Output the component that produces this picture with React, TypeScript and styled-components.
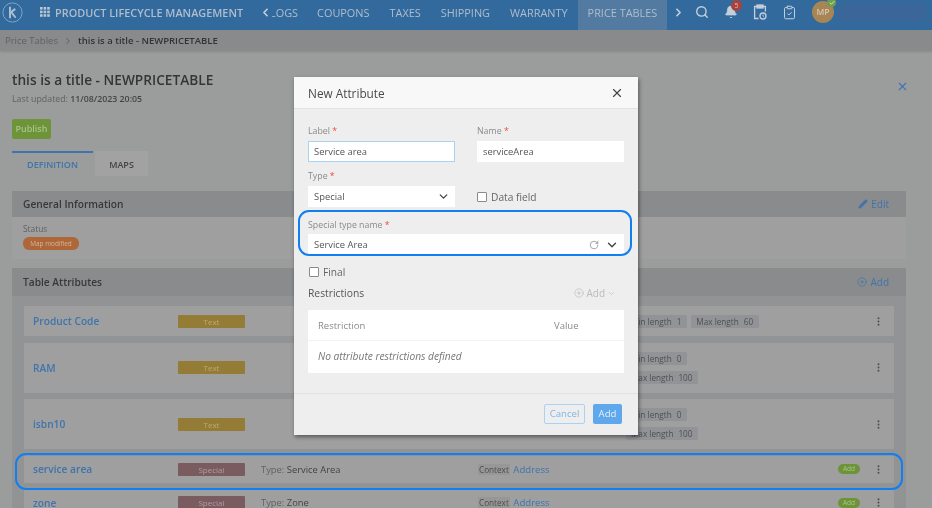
import React from "react";
import styled, { createGlobalStyle } from "styled-components";
import { Bell, Check, ChevronDown, ChevronLeft, ChevronRight, CirclePlus, ClipboardCheck, EllipsisVertical, Pencil, RotateCw, Search, X } from "lucide-react";

const GlobalStyle = createGlobalStyle`
  * { box-sizing: border-box; }
  html, body { margin: 0; padding: 0; width: 932px; height: 508px; overflow: hidden; }
  body { font-family: "Open Sans", "Liberation Sans", sans-serif; color: #333; }
`;

type Attr = {
  name: string;
  type: "Text" | "Special";
  tall?: boolean;
  typeName?: string;
  min?: number;
  max?: number;
};

const attributes: Attr[] = [
  { name: "Product Code", type: "Text", min: 1, max: 60 },
  { name: "RAM", type: "Text", tall: true, min: 0, max: 100 },
  { name: "isbn10", type: "Text", tall: true, min: 0, max: 100 },
  { name: "service area", type: "Special", typeName: "Service Area" },
  { name: "zone", type: "Special", typeName: "Zone" },
];

const navItems = ["COUPONS", "TAXES", "SHIPPING", "WARRANTY"];

const GridIcon = () => (
  <svg width="10" height="10" viewBox="0 0 10 10" fill="#b9c6d4">
    {[0, 3.6, 7.2].map((y) =>
      [0, 3.6, 7.2].map((x) => <rect key={`${x}-${y}`} x={x} y={y} width="2.6" height="2.6" />)
    )}
  </svg>
);

const LogoIcon = () => (
  <svg width="21" height="21" viewBox="0 0 21 21" fill="none">
    <circle cx="10.5" cy="10.5" r="9.6" stroke="#7fa3c6" strokeWidth="1" />
    <path d="M8 5.5v10M8 11l4.6-3.6M9.5 10.4l3.6 4.6" stroke="#a8bdd2" strokeWidth="2" strokeLinecap="round" />
  </svg>
);

const ClipboardClockIcon = () => (
  <svg width="14" height="16" viewBox="0 0 14 16" fill="none" stroke="#c3cfdb" strokeWidth="1.3">
    <path d="M4 2.5H1.6v12h4M10 2.5h2.4v5" />
    <rect x="4" y="1" width="6" height="3" fill="#c3cfdb" />
    <circle cx="10" cy="12" r="3" />
    <path d="M10 10.6V12l1 .6" strokeWidth="0.9" />
  </svg>
);

export default function App() {
  return (
    <Page>
      <GlobalStyle />
      <TopBar>
        <LogoSlot>
          <LogoIcon />
        </LogoSlot>
        <AppName>
          <GridIcon />
          PRODUCT LIFECYCLE MANAGEMENT
        </AppName>
        <NavArrow $side="left">
          <ChevronLeft size={13} strokeWidth={3} />
        </NavArrow>
        <NavScroller>
          <ClippedItem>LOGS</ClippedItem>
          {navItems.map((item) => (
            <NavItem key={item}>{item}</NavItem>
          ))}
          <ActiveNavItem>PRICE TABLES</ActiveNavItem>
        </NavScroller>
        <NavArrow $side="right">
          <ChevronRight size={13} strokeWidth={3} />
        </NavArrow>
        <ToolIcons>
          <Search size={14} strokeWidth={2.4} />
          <BellWrap>
            <Bell size={14} fill="#c3cfdb" strokeWidth={1.5} />
            <BellBadge>5</BellBadge>
          </BellWrap>
          <ClipboardClockIcon />
          <ClipboardCheck size={15} strokeWidth={1.6} />
        </ToolIcons>
        <Avatar>
          MP
          <AvatarCheck>
            <Check size={6} strokeWidth={4} />
          </AvatarCheck>
        </Avatar>
        <UserBox />
      </TopBar>

      <Breadcrumb>
        <CrumbLink>Price Tables</CrumbLink>
        <ChevronRight size={10} strokeWidth={2} />
        <CrumbCurrent>this is a title - NEWPRICETABLE</CrumbCurrent>
      </Breadcrumb>

      <Content>
        <TitleRow>
          <div>
            <Title>this is a title - NEWPRICETABLE</Title>
            <Updated>
              Last updated: <strong>11/08/2023 20:05</strong>
            </Updated>
          </div>
          <PageClose>
            <X size={13} strokeWidth={2} />
          </PageClose>
        </TitleRow>
        <PublishButton>Publish</PublishButton>
        <Tabs>
          <Tab $active>DEFINITION</Tab>
          <Tab>MAPS</Tab>
        </Tabs>

        <Section>
          <SectionHead>
            <SectionTitle>General Information</SectionTitle>
            <SectionAction>
              <Pencil size={10} fill="#3f74ad" strokeWidth={1.5} />
              Edit
            </SectionAction>
          </SectionHead>
          <InfoBody>
            <StatusLabel>Status</StatusLabel>
            <StatusPill>Map modified</StatusPill>
          </InfoBody>
        </Section>

        <Section>
          <SectionHead $tall>
            <SectionTitle>Table Attributes</SectionTitle>
            <SectionAction>
              <CirclePlus size={10} strokeWidth={1.6} />
              Add
            </SectionAction>
          </SectionHead>
          <Rows>
            {attributes.map((attr) => (
              <Row key={attr.name} $tall={attr.tall} $special={attr.type === "Special"}>
                <RowName>{attr.name}</RowName>
                <TypeBadge $type={attr.type}>{attr.type}</TypeBadge>
                {attr.type === "Special" ? (
                  <>
                    <TypeInfo>
                      <span>Type:</span> {attr.typeName}
                    </TypeInfo>
                    <ContextInfo>
                      <ContextTag>Context</ContextTag> Address
                    </ContextInfo>
                    <AddPill>Add</AddPill>
                  </>
                ) : (
                  <Chips $stack={attr.tall}>
                    <Chip>
                      Min length <b>{attr.min}</b>
                    </Chip>
                    <Chip>
                      Max length <b>{attr.max}</b>
                    </Chip>
                  </Chips>
                )}
                <RowMenu>
                  <EllipsisVertical size={11} strokeWidth={2.2} />
                </RowMenu>
              </Row>
            ))}
          </Rows>
        </Section>
      </Content>

      <Overlay>
        <RowRing />
        <Modal>
          <ModalHead>
            New Attribute
            <X size={14} strokeWidth={2} color="#444" />
          </ModalHead>
          <ModalBody>
            <FieldGrid>
              <Field>
                <FieldLabel>
                  Label <Req>*</Req>
                </FieldLabel>
                <Input $focus>Service area</Input>
              </Field>
              <Field>
                <FieldLabel>
                  Name <Req>*</Req>
                </FieldLabel>
                <Input>serviceArea</Input>
              </Field>
              <Field>
                <FieldLabel>
                  Type <Req>*</Req>
                </FieldLabel>
                <Input>
                  Special
                  <ChevronDown size={13} strokeWidth={2.4} color="#444" />
                </Input>
              </Field>
              <InlineCheck>
                <CheckBox />
                Data field
              </InlineCheck>
            </FieldGrid>
            <SpecialField>
              <FieldLabel>
                Special type name <Req>*</Req>
              </FieldLabel>
              <Input>
                Service Area
                <InputIcons>
                  <RotateCw size={10} strokeWidth={1.8} color="#888" />
                  <ChevronDown size={14} strokeWidth={2.4} color="#444" />
                </InputIcons>
              </Input>
            </SpecialField>
            <FinalCheck>
              <CheckBox />
              Final
            </FinalCheck>
            <RestrictionsHead>
              Restrictions
              <MutedAdd>
                <CirclePlus size={10} strokeWidth={1.6} />
                Add
                <ChevronDown size={9} strokeWidth={1.6} />
              </MutedAdd>
            </RestrictionsHead>
            <RestrictionTable>
              <RestrictionHeader>
                <span>Restriction</span>
                <span>Value</span>
              </RestrictionHeader>
              <EmptyNote>No attribute restrictions defined</EmptyNote>
            </RestrictionTable>
          </ModalBody>
          <ModalFooter>
            <CancelButton>Cancel</CancelButton>
            <AddButton>Add</AddButton>
          </ModalFooter>
        </Modal>
        <SpecialRing />
      </Overlay>
    </Page>
  );
}

const Page = styled.div`
  position: relative;
  width: 932px;
  height: 508px;
  overflow: hidden;
  background: #9b9d9c;
  filter: blur(0.5px);
`;

const TopBar = styled.header`
  display: flex;
  align-items: center;
  height: 30px;
  padding-bottom: 6px;
  background: #336a9e;
  color: #aebdcd;
  font-size: 10.9px;
  white-space: nowrap;
`;

const LogoSlot = styled.div`
  display: flex;
  width: 40px;
  padding-left: 2px;
`;

const AppName = styled.div`
  display: flex;
  align-items: center;
  gap: 5px;
  width: 219px;
  font-weight: 600;
`;

const NavArrow = styled.div<{ $side: "left" | "right" }>`
  display: flex;
  width: ${({ $side }) => ($side === "left" ? "13px" : "26px")};
  padding-left: ${({ $side }) => ($side === "left" ? "0" : "3px")};
  color: #c3cfdb;
`;

const NavScroller = styled.nav`
  display: flex;
  align-items: center;
  width: 397px;
  height: 30px;
  margin-bottom: -6px;
  overflow: hidden;
  padding-bottom: 6px;
`;

const ClippedItem = styled.span`
  margin-left: -2px;
  margin-right: 19px;
`;

const NavItem = styled.span`
  margin-right: 20px;
`;

const ActiveNavItem = styled.span`
  display: flex;
  align-items: center;
  height: 30px;
  margin: 0 0 -6px -10px;
  padding: 0 10px 6px;
  background: #537aa1;
`;

const ToolIcons = styled.div`
  display: flex;
  align-items: center;
  gap: 15px;
  width: 117px;
  color: #c3cfdb;
`;

const BellWrap = styled.div`
  position: relative;
  display: flex;
`;

const BellBadge = styled.span`
  position: absolute;
  top: -5px;
  left: 7px;
  width: 11px;
  height: 11px;
  border-radius: 50%;
  background: #a8423f;
  color: #d8c4c2;
  font-size: 7px;
  line-height: 11px;
  text-align: center;
`;

const Avatar = styled.div`
  position: relative;
  width: 22px;
  height: 22px;
  border-radius: 50%;
  background: #a88552;
  color: #d0c8b8;
  font-size: 8.5px;
  font-weight: 600;
  line-height: 22px;
  text-align: center;
`;

const AvatarCheck = styled.span`
  position: absolute;
  top: -3px;
  right: -2px;
  display: flex;
  align-items: center;
  justify-content: center;
  width: 9px;
  height: 9px;
  border-radius: 50%;
  background: #6f9f4d;
  color: #d5e2c8;
`;

const UserBox = styled.div`
  width: 88px;
  height: 19px;
  margin-left: 4px;
  background: #3a6699;
`;

const Breadcrumb = styled.div`
  display: flex;
  align-items: center;
  gap: 5px;
  height: 21px;
  padding-left: 5px;
  background: #898a8b;
  box-shadow: 0 1px 2px rgba(0, 0, 0, 0.12);
  font-size: 9.5px;
  color: #555;
`;

const CrumbLink = styled.span`
  color: #5f6163;
`;

const CrumbCurrent = styled.span`
  color: #333;
  font-weight: 600;
`;

const Content = styled.main`
  padding: 19px 26px 0 12px;
`;

const TitleRow = styled.div`
  display: flex;
  justify-content: space-between;
`;

const Title = styled.h1`
  margin: 0;
  height: 20px;
  font-size: 13.7px;
  font-weight: 600;
  line-height: 20px;
  color: #353535;
`;

const Updated = styled.div`
  margin-top: 2px;
  height: 14px;
  font-size: 8.8px;
  line-height: 14px;
  color: #5f6163;

  strong {
    font-weight: 600;
    color: #444;
  }
`;

const PageClose = styled.div`
  display: flex;
  align-items: center;
  height: 13px;
  margin: 0 -3px 0 0;
  padding-top: 16px;
  color: #3f74ad;
`;

const PublishButton = styled.div`
  width: 39px;
  height: 20px;
  margin-top: 13px;
  border-radius: 2px;
  background: #6d9439;
  color: #a8c38a;
  font-size: 9px;
  font-weight: 600;
  line-height: 20px;
  text-align: center;
`;

const Tabs = styled.div`
  display: flex;
  gap: 2px;
  height: 25px;
  margin-top: 12px;
`;

const Tab = styled.div<{ $active?: boolean }>`
  width: ${({ $active }) => ($active ? "81px" : "53px")};
  border-top: 2px solid ${({ $active }) => ($active ? "#3f74ad" : "transparent")};
  background: ${({ $active }) => ($active ? "#9b9d9c" : "#a2a2a2")};
  color: ${({ $active }) => ($active ? "#3f74ad" : "#444")};
  font-size: 9px;
  font-weight: 600;
  line-height: 23px;
  text-align: center;
`;

const Section = styled.section`
  margin-top: 9px;
  background: #929394;

  &:first-of-type {
    margin-top: 15px;
  }
`;

const SectionHead = styled.div<{ $tall?: boolean }>`
  display: flex;
  align-items: center;
  justify-content: space-between;
  height: ${({ $tall }) => ($tall ? "28px" : "26px")};
  padding: 0 17px 0 11px;
  background: #8a8b8d;
`;

const SectionTitle = styled.h2`
  margin: 0;
  font-size: 10.2px;
  font-weight: 600;
  color: #383838;
`;

const SectionAction = styled.div`
  display: flex;
  align-items: center;
  gap: 3px;
  font-size: 10px;
  color: #3f74ad;
`;

const InfoBody = styled.div`
  height: 42px;
  padding: 5px 11px;
  background: #9f9f9f;
`;

const StatusLabel = styled.div`
  height: 14px;
  font-size: 8.4px;
  line-height: 14px;
  color: #5f6163;
`;

const StatusPill = styled.div`
  width: 56px;
  height: 13px;
  margin-top: 1px;
  border-radius: 6px;
  background: #ae6739;
  color: #d2b59e;
  font-size: 6.4px;
  line-height: 13px;
  text-align: center;
`;

const Rows = styled.div`
  display: flex;
  flex-direction: column;
  gap: 6.5px;
  padding: 10px 12px 40px;
`;

const Row = styled.div<{ $tall?: boolean; $special?: boolean }>`
  display: flex;
  flex-shrink: 0;
  align-items: center;
  height: ${({ $tall, $special }) => ($tall ? "50px" : $special ? "27px" : "30px")};
  padding-left: 9px;
  background: #9f9f9f;
`;

const RowName = styled.div`
  width: 145px;
  font-size: 10.2px;
  font-weight: 600;
  color: #3f74ad;
`;

const TypeBadge = styled.div<{ $type: string }>`
  width: 67px;
  height: 13px;
  border-radius: 1px;
  background: ${({ $type }) => ($type === "Text" ? "#957c36" : "#7a5c60")};
  color: ${({ $type }) => ($type === "Text" ? "#bba870" : "#b09da0")};
  font-size: 8px;
  line-height: 13px;
  text-align: center;
`;

const TypeInfo = styled.div`
  width: 217px;
  margin-left: 16px;
  font-size: 9.4px;
  color: #444;

  span {
    color: #5f6163;
  }
`;

const ContextInfo = styled.div`
  flex: 1;
  font-size: 9.6px;
  color: #3f74ad;
`;

const ContextTag = styled.span`
  margin-right: 1px;
  padding: 0 1px;
  background: #979798;
  color: #4c4c4c;
  font-size: 8.2px;
`;

const AddPill = styled.div`
  width: 22px;
  height: 10px;
  margin-right: 13px;
  border-radius: 5px;
  background: #6d9439;
  color: #a8c38a;
  font-size: 6.5px;
  line-height: 10px;
  text-align: center;
`;

const Chips = styled.div<{ $stack?: boolean }>`
  display: flex;
  flex: 1;
  flex-direction: ${({ $stack }) => ($stack ? "column" : "row")};
  align-items: flex-start;
  gap: ${({ $stack }) => ($stack ? "6px" : "4px")};
  margin-left: 381px;
`;

const Chip = styled.div`
  display: flex;
  gap: 5px;
  align-items: center;
  height: 13px;
  padding: 0 6px 0 5px;
  border-radius: 2px;
  background: #919397;
  color: #4e4f52;
  font-size: 8.2px;

  b {
    font-weight: 400;
  }
`;

const RowMenu = styled.div`
  display: flex;
  width: 21px;
  color: #4c4c4c;
`;

const Overlay = styled.div`
  position: absolute;
  inset: 0;
`;

const RowRing = styled.div`
  position: absolute;
  left: 15px;
  top: 453px;
  width: 888px;
  height: 37px;
  border: 2px solid #0f7ff2;
  border-radius: 11px;
`;

const SpecialRing = styled.div`
  position: absolute;
  left: 298px;
  top: 210px;
  width: 334px;
  height: 46px;
  border: 2px solid #0f7ff2;
  border-radius: 11px;
`;

const Modal = styled.div`
  position: absolute;
  left: 294px;
  top: 77px;
  display: flex;
  flex-direction: column;
  width: 344px;
  height: 358px;
  background: #eeeeee;
  box-shadow: 1px 2px 4px rgba(0, 0, 0, 0.45);
`;

const ModalHead = styled.div`
  display: flex;
  align-items: center;
  justify-content: space-between;
  height: 32px;
  padding: 0 14px;
  background: #f8f8f8;
  border-bottom: 1px solid #e2e2e2;
  color: #4a4a4a;
  font-size: 11.8px;
`;

const ModalBody = styled.div`
  flex: 1;
  padding: 16px 14px 0;
`;

const FieldGrid = styled.div`
  display: grid;
  grid-template-columns: 147px 147px;
  column-gap: 22px;
  row-gap: 8px;
`;

const Field = styled.div`
  display: flex;
  flex-direction: column;
  gap: 3px;
`;

const FieldLabel = styled.label`
  height: 13px;
  font-size: 8.8px;
  line-height: 13px;
  color: #8a8a8a;
`;

const Req = styled.span`
  color: #e8503a;
`;

const Input = styled.div<{ $focus?: boolean }>`
  display: flex;
  align-items: center;
  justify-content: space-between;
  height: 21px;
  padding: 0 4px 0 5px;
  border: 1px solid ${({ $focus }) => ($focus ? "#a9d2f3" : "#fff")};
  background: #fff;
  color: #555;
  font-size: 9.4px;
`;

const InlineCheck = styled.div`
  display: flex;
  align-items: center;
  gap: 4px;
  padding-top: 16px;
  color: #666;
  font-size: 10.2px;
`;

const CheckBox = styled.span`
  width: 10px;
  height: 10px;
  border: 1px solid #8a8a8a;
  border-radius: 1px;
  background: #fff;
`;

const SpecialField = styled(Field)`
  gap: 2px;
  margin-top: 12px;
`;

const InputIcons = styled.span`
  display: flex;
  align-items: center;
  gap: 6px;
`;

const FinalCheck = styled(InlineCheck)`
  margin: 10px 0 0 1px;
  padding: 0;
`;

const RestrictionsHead = styled.div`
  display: flex;
  align-items: center;
  justify-content: space-between;
  height: 16px;
  margin-top: 6px;
  padding-right: 8px;
  color: #555;
  font-size: 10.3px;
`;

const MutedAdd = styled.span`
  display: flex;
  align-items: center;
  gap: 2px;
  color: #bbb;
  font-size: 10px;
`;

const RestrictionTable = styled.div`
  width: 316px;
  margin-top: 9px;
  background: #fff;
`;

const RestrictionHeader = styled.div`
  display: grid;
  grid-template-columns: 236px 1fr;
  align-items: center;
  height: 31px;
  padding-left: 10px;
  border-bottom: 1px solid #f3f3f3;
  color: #8a8a8a;
  font-size: 9.5px;
`;

const EmptyNote = styled.div`
  height: 32px;
  padding-left: 10px;
  color: #777;
  font-size: 10.2px;
  font-style: italic;
  line-height: 31px;
`;

const ModalFooter = styled.div`
  display: flex;
  justify-content: flex-end;
  gap: 8px;
  height: 42px;
  padding: 10px 16px 0 0;
  border-top: 1px solid #e2e2e2;
`;

const CancelButton = styled.div`
  width: 41px;
  height: 20px;
  border: 1px solid #a9d2f3;
  border-radius: 2px;
  color: #7fb7e8;
  font-size: 9.6px;
  line-height: 18px;
  text-align: center;
`;

const AddButton = styled.div`
  width: 29px;
  height: 20px;
  border-radius: 2px;
  background: #5fa8ec;
  color: #e4f0fb;
  font-size: 9.6px;
  line-height: 20px;
  text-align: center;
`;
